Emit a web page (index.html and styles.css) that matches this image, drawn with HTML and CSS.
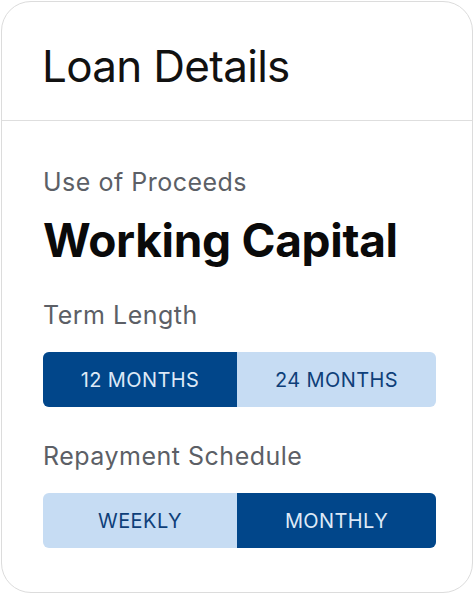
FILE: index.html
```html
<!DOCTYPE html>
<html>
<head>
  <meta charset="UTF-8">
  <title>Loan Details</title>
  <link rel="stylesheet" href="styles.css">
</head>
<body>
  <div class="card">
    <div class="card-header">
      <h1>Loan Details</h1>
    </div>
    <div class="card-body">
      <div class="label">Use of Proceeds</div>
      <div class="value">Working Capital</div>

      <div class="label label-gap">Term Length</div>
      <div class="toggle">
        <button class="active">12 MONTHS</button>
        <button>24 MONTHS</button>
      </div>

      <div class="label label-gap label-tight">Repayment Schedule</div>
      <div class="toggle">
        <button>WEEKLY</button>
        <button class="active">MONTHLY</button>
      </div>
    </div>
  </div>
</body>
</html>
```

FILE: styles.css
```css
/* loan details card */
body {
  margin: 0;
  padding: 1px;
  background: #fff;
  font-family: Inter, "Noto Sans", sans-serif;
}

.card {
  box-sizing: border-box;
  width: 472px;
  height: 592px;
  border: 1px solid #dcdcdc;
  border-radius: 30px;
  background: #fff;
}

.card-header {
  padding: 42px 41px 32px 40px;
  border-bottom: 1px solid #dedede;
}

.card-header h1 {
  margin: 0;
  font-size: 44px;
  line-height: 44px;
  font-weight: 400;
  letter-spacing: -0.7px;
  color: #111;
}

.card-body {
  padding: 49px 36px 0 41px;
}

.label {
  font-size: 25px;
  line-height: 24px;
  letter-spacing: 0.5px;
  color: #5c5f66;
}

.label-gap {
  margin-top: 40px;
}

.label-tight {
  margin-top: 37px;
}

.value {
  margin-top: 23px;
  font-size: 46px;
  line-height: 46px;
  font-weight: 700;
  letter-spacing: -0.3px;
  color: #0a0a0a;
}

.toggle {
  display: grid;
  grid-template-columns: 194px 1fr;
  margin-top: 25px;
  height: 55px;
  border-radius: 6px;
  overflow: hidden;
  background: #c6dcf3;
}

.toggle button {
  border: none;
  background: transparent;
  font-family: inherit;
  font-size: 20px;
  letter-spacing: 0.4px;
  color: #0e3f79;
  cursor: pointer;
}

.toggle button.active {
  background: #01468a;
  color: #dde9f7;
}
```
